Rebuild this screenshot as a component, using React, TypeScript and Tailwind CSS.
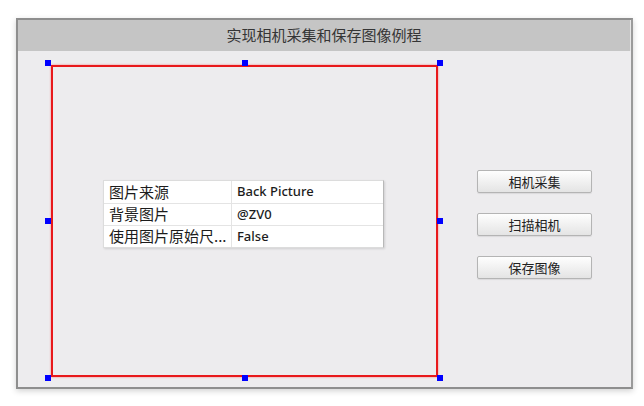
import React from "react";

const cjk = { fontFamily: '"Noto Sans CJK SC", "Noto Sans", sans-serif' };
const latin = { fontFamily: '"Noto Sans", "Noto Sans CJK SC", sans-serif' };

function Handle({ className }: { className: string }) {
  return <div className={"absolute w-[6px] h-[6px] bg-[#0000ff] " + className} />;
}

const rows: [string, string][] = [
  ["图片来源", "Back Picture"],
  ["背景图片", "@ZV0"],
  ["使用图片原始尺...", "False"],
];

export default function App() {
  return (
    <div className="w-[644px] h-[406px] bg-white pt-[18px] pl-[16px]">
      <div className="w-[617px] h-[371px] flex flex-col border-2 border-[#8e8e8e] border-r-[#9a9a9a] shadow-[0_2px_6px_rgba(0,0,0,0.18)]">
        <div
          className="h-[31px] bg-[#c5c5c5] flex items-center justify-center text-[15px] text-[#353535] border-r border-[#e6e6e6]"
          style={cjk}
        >
          实现相机采集和保存图像例程
        </div>
        <div className="flex-1 bg-[#edecee] flex flex-row pt-[14px] pl-[33px]">
          <div className="relative w-[387px] h-[312px] border-2 border-[#e8191b] shadow-[0_0_2px_rgba(255,0,0,0.45)]">
            <Handle className="-left-[8px] -top-[7px]" />
            <Handle className="left-1/2 -translate-x-1/2 -top-[7px]" />
            <Handle className="-right-[7px] -top-[7px]" />
            <Handle className="-left-[8px] top-1/2 -translate-y-1/2" />
            <Handle className="-right-[7px] top-1/2 -translate-y-1/2" />
            <Handle className="-left-[8px] -bottom-[6px]" />
            <Handle className="left-1/2 -translate-x-1/2 -bottom-[6px]" />
            <Handle className="-right-[7px] -bottom-[6px]" />
            <div className="pt-[113px] pl-[50px]">
              <div className="w-[281px] bg-white border border-[#dcdcdc] border-r-[#b8b8b8] shadow-[1px_1px_2px_rgba(0,0,0,0.12)]">
                {rows.map(([k, v], i) => (
                  <div
                    key={i}
                    className={
                      "flex h-[22px] items-center text-[#1c1c1c]" +
                      (i > 0 ? " border-t border-[#e4e4e4]" : "")
                    }
                  >
                    <div
                      className="w-[128px] h-full flex items-center pl-[5px] border-r border-[#e4e4e4] whitespace-nowrap overflow-hidden text-[15px]"
                      style={cjk}
                    >
                      {k}
                    </div>
                    <div className="pl-[5px] text-[13px] font-medium" style={latin}>
                      {v}
                    </div>
                  </div>
                ))}
              </div>
            </div>
          </div>
          <div className="ml-[39px] mt-[105px] flex flex-col gap-[20px]">
            {["相机采集", "扫描相机", "保存图像"].map((t) => (
              <button
                key={t}
                className="w-[115px] h-[23px] flex items-center justify-center text-[13px] text-[#222] border border-[#b4b4b4] rounded-[2px] bg-gradient-to-b from-[#fefefe] to-[#e4e4e4] shadow-[0_1px_1px_rgba(0,0,0,0.08)]"
                style={cjk}
              >
                {t}
              </button>
            ))}
          </div>
        </div>
      </div>
    </div>
  );
}
